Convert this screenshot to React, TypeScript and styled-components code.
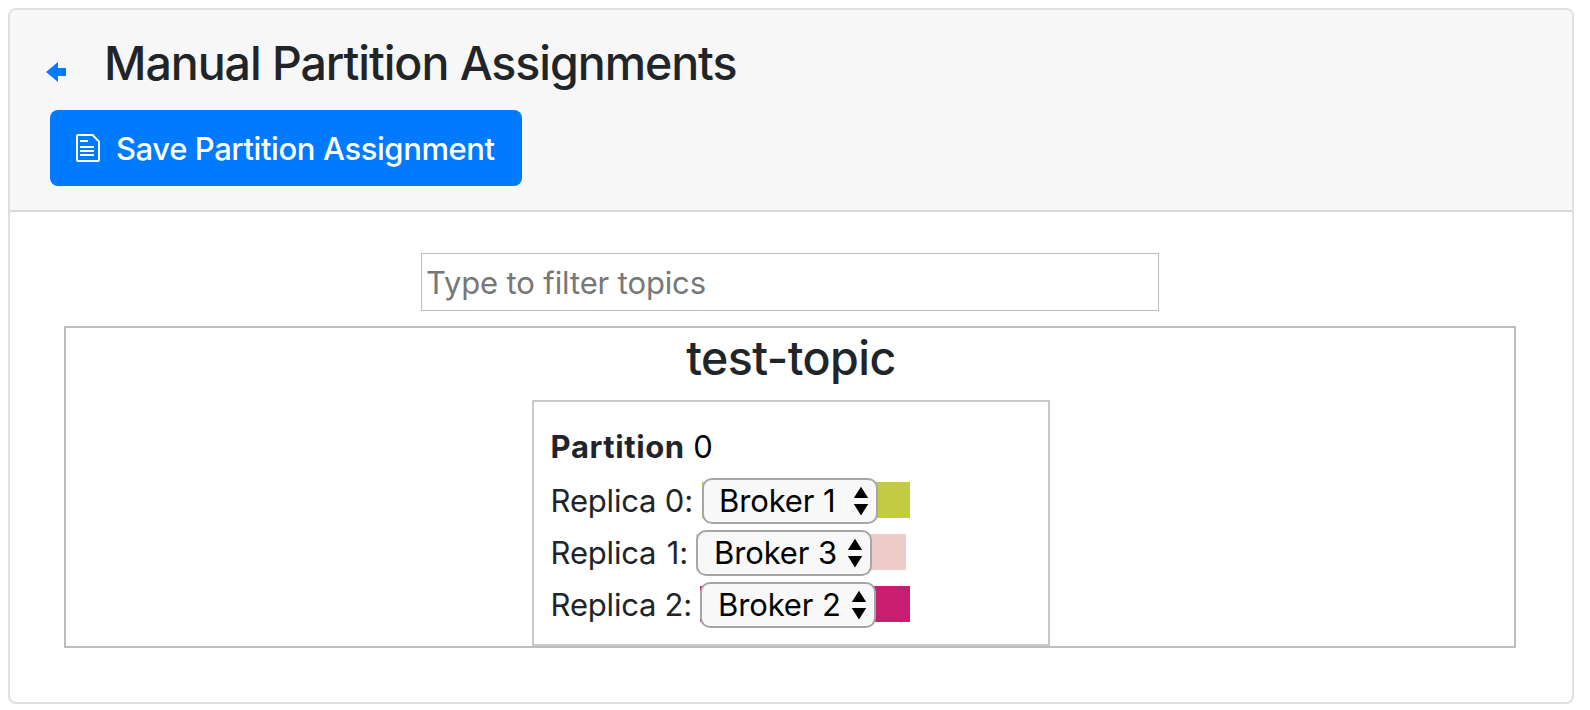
import React from "react";
import styled, { createGlobalStyle } from "styled-components";

const GlobalStyle = createGlobalStyle`
  *, *::before, *::after { box-sizing: border-box; }
  body {
    margin: 0;
    background: #fff;
    color: #212529;
    font-family: Inter, "Liberation Sans", sans-serif;
    font-size: 31px;
    letter-spacing: -0.18px;
    overflow: hidden;
  }
`;

const Page = styled.main`
  padding: 8px 16px 6px 8px;
`;

const Card = styled.section`
  height: 696px;
  border: 2px solid #dfdfdf;
  border-radius: 8px;
  background: #fff;
  overflow: hidden;
`;

const CardHeader = styled.header`
  height: 202px;
  padding: 25px 36px 0;
  border-bottom: 2px solid #d7d7d7;
  background: #f7f7f7;
`;

const TitleRow = styled.div`
  display: flex;
  align-items: flex-start;
`;

const BackLink = styled.a`
  display: block;
  width: 20px;
  height: 20px;
  margin: 27px 38px 0 0;
  color: #007bff;

  svg { display: block; }
`;

const Title = styled.h2`
  margin: 0;
  font-size: 46.5px;
  font-weight: 500;
  line-height: 56px;
  letter-spacing: -1.06px;
  white-space: nowrap;
`;

const SaveButton = styled.button`
  display: flex;
  align-items: center;
  gap: 16px;
  width: 472px;
  height: 76px;
  margin: 19px 0 0 4px;
  padding: 0 0 0 26px;
  border: 0;
  border-radius: 8px;
  background: #007bff;
  color: #fff;
  font: 500 31px/46px Inter, "Liberation Sans", sans-serif;
  letter-spacing: -0.41px;
  white-space: nowrap;
`;

const SaveLabel = styled.span`
  padding-top: 1px;
`;

const CardBody = styled.div`
  display: flex;
  flex-direction: column;
  align-items: center;
  padding: 41px 56px 0 54px;
`;

const FilterInput = styled.input`
  width: 738px;
  height: 58px;
  padding: 0 4px;
  border: 1px solid #bdbdbd;
  background: #fff;
  color: #212529;
  font: 400 31px Inter, "Liberation Sans", sans-serif;
  letter-spacing: -0.13px;
  outline: 0;

  &::placeholder { color: #777; opacity: 1; }
`;

const Topic = styled.section`
  display: flex;
  flex-direction: column;
  align-items: center;
  width: 100%;
  height: 322px;
  margin-top: 15px;
  border: 2px solid #bdbdbd;
`;

const TopicName = styled.h2`
  margin: 3px 0 15px 2px;
  font-size: 46.5px;
  font-weight: 500;
  line-height: 54px;
  letter-spacing: -0.55px;
`;

const PartitionBox = styled.div`
  width: 518px;
  height: 246px;
  margin-left: 2px;
  padding: 18px 16px 0 16.6px;
  border: 2px solid #c8c8c8;
`;

const PartitionHeading = styled.div`
  display: flex;
  gap: 8.5px;
  margin-bottom: 2px;
  line-height: 53px;

  strong { font-weight: 700; letter-spacing: 0.6px; }
  span { color: #000; }
`;

const ReplicaRow = styled.div`
  display: flex;
  align-items: flex-start;
  height: 52px;
`;

const ReplicaLabel = styled.label<{ $width: number; $wordGap: number }>`
  width: ${(p) => p.$width}px;
  line-height: 52px;
  word-spacing: ${(p) => p.$wordGap}px;
  white-space: nowrap;
`;

const Swatch = styled.div<{ $color: string; $width: number }>`
  width: ${(p) => p.$width}px;
  height: 36px;
  margin-top: 7px;
  background: ${(p) => p.$color};
`;

const SelectWrap = styled.div`
  position: relative;
  width: 176px;
  height: 46px;
  margin-top: -4px;

  svg {
    position: absolute;
    top: 8px;
    right: 9px;
    pointer-events: none;
  }
`;

const BrokerSelect = styled.select<{ $wordGap: number; $indent: number }>`
  appearance: none;
  display: block;
  width: 176px;
  height: 46px;
  margin: 0;
  padding: 0 0 2px ${(p) => p.$indent}px;
  border: 2px solid #a6a6a6;
  border-radius: 10px;
  background: #f8f8f8;
  color: #000;
  font: 400 31px Inter, "Liberation Sans", sans-serif;
  letter-spacing: -0.12px;
  word-spacing: ${(p) => p.$wordGap}px;
  outline: 0;
`;

const brokers = ["Broker 1", "Broker 2", "Broker 3"];

const replicas = [
  { label: "Replica 0:", broker: "Broker 1", color: "#c3cb43", labelWidth: 151.4, swatchWidth: 208, labelGap: 0, brokerGap: 0, indent: 15 },
  { label: "Replica 1:", broker: "Broker 3", color: "#edcbc9", labelWidth: 145.4, swatchWidth: 210, labelGap: 2, brokerGap: 0, indent: 16 },
  { label: "Replica 2:", broker: "Broker 2", color: "#c81e72", labelWidth: 149.4, swatchWidth: 210, labelGap: -0.3, brokerGap: 0, indent: 16 },
];

const ArrowIcon = () => (
  <svg width="20" height="20" viewBox="0 0 20 20" fill="currentColor">
    <path d="M12 0v6h8v8h-8v6L0 10z" />
  </svg>
);

const DocumentIcon = () => (
  <svg width="24" height="28" viewBox="0 0 24 28" fill="none" stroke="currentColor" strokeWidth="2">
    <path d="M2 1h14.6L23 7.6V26a1 1 0 0 1-1 1H2a1 1 0 0 1-1-1V2a1 1 0 0 1 1-1z" />
    <path d="M4 7h8M4 13h14M4 17h14M4 21h14" />
  </svg>
);

const StepperIcon = () => (
  <svg width="16" height="30" viewBox="0 0 16 30" fill="#000">
    <path d="M8 .7 15.2 12H.8zM8 29.5.8 18h14.4z" />
  </svg>
);

export default function App() {
  return (
    <Page>
      <GlobalStyle />
      <Card>
        <CardHeader>
          <TitleRow>
            <BackLink href="#" aria-label="Back">
              <ArrowIcon />
            </BackLink>
            <Title>Manual Partition Assignments</Title>
          </TitleRow>
          <SaveButton type="button">
            <DocumentIcon />
            <SaveLabel>Save Partition Assignment</SaveLabel>
          </SaveButton>
        </CardHeader>
        <CardBody>
          <FilterInput type="text" placeholder="Type to filter topics" />
          <Topic>
            <TopicName>test-topic</TopicName>
            <PartitionBox>
              <PartitionHeading>
                <strong>Partition</strong>
                <span>0</span>
              </PartitionHeading>
              {replicas.map((r) => (
                <ReplicaRow key={r.label}>
                  <ReplicaLabel $width={r.labelWidth} $wordGap={r.labelGap}>
                    {r.label}
                  </ReplicaLabel>
                  <Swatch $color={r.color} $width={r.swatchWidth}>
                    <SelectWrap>
                      <BrokerSelect $wordGap={r.brokerGap} $indent={r.indent} defaultValue={r.broker}>
                        {brokers.map((b) => (
                          <option key={b}>{b}</option>
                        ))}
                      </BrokerSelect>
                      <StepperIcon />
                    </SelectWrap>
                  </Swatch>
                </ReplicaRow>
              ))}
            </PartitionBox>
          </Topic>
        </CardBody>
      </Card>
    </Page>
  );
}
